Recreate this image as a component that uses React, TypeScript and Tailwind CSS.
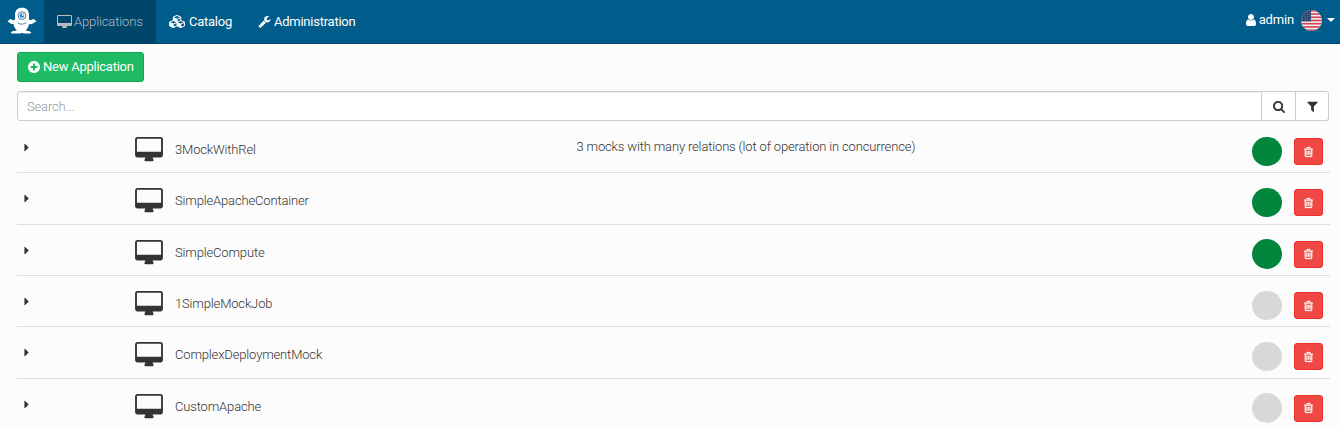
import React from "react";

const icons = {
  desktop: {
    box: "-64 0 1920 1792",
    d: "M1728 992v-832q0-13-9.5-22.5t-22.5-9.5h-1600q-13 0-22.5 9.5t-9.5 22.5v832q0 13 9.5 22.5t22.5 9.5h1600q13 0 22.5-9.5t9.5-22.5zm128-832v1088q0 66-47 113t-113 47h-544q0 37 16 77.5t32 71 16 43.5q0 26-19 45t-45 19h-512q-26 0-45-19t-19-45q0-14 16-44t32-70 16-78h-544q-66 0-113-47t-47-113v-1088q0-66 47-113t113-47h1600q66 0 113 47t47 113z",
  },
  cubes: {
    box: "0 0 2304 1792",
    d: "M640 1632l384-192v-314l-384 164v342zm-64-454l404-173-404-173-404 173zm1088 454l384-192v-314l-384 164v342zm-64-454l404-173-404-173-404 173zm-448-293l384-165v-266l-384 164v267zm-64-379l441-189-441-189-441 189zm1088 518v416q0 36-19 67t-52 47l-448 224q-25 14-57 14t-57-14l-448-224q-4-2-7-4-2 2-7 4l-448 224q-25 14-57 14t-57-14l-448-224q-33-16-52-47t-19-67v-416q0-38 21.5-70t56.5-48l434-186v-400q0-38 21.5-70t56.5-48l448-192q23-10 50-10t50 10l448 192q35 16 56.5 48t21.5 70v400l434 186q36 16 57 48t21 70z",
  },
  wrench: {
    box: "64 0 1664 1792",
    d: "M448 1472q0-26-19-45t-45-19-45 19-19 45 19 45 45 19 45-19 19-45zm644-420l-682 682q-37 37-90 37-52 0-91-37l-106-108q-38-36-38-90 0-53 38-91l681-681q39 98 114.5 173.5t173.5 114.5zm634-435q0 39-23 106-47 134-164.5 217.5t-258.5 83.5q-185 0-316.5-131.5t-131.5-316.5 131.5-316.5 316.5-131.5q58 0 121.5 16.5t107.5 46.5q16 11 16 28t-16 28l-293 169v224l193 107q5-3 79-48.5t135.5-81 70.5-35.5q15 0 23.5 10t8.5 25z",
  },
  user: {
    box: "256 0 1280 1792",
    d: "M1536 1399q0 109-62.5 187t-150.5 78h-854q-88 0-150.5-78t-62.5-187q0-85 8.5-160.5t31.5-152 58.5-131 94-89 134.5-34.5q131 128 313 128t313-128q76 0 134.5 34.5t94 89 58.5 131 31.5 152 8.5 160.5zm-256-887q0 159-112.5 271.5t-271.5 112.5-271.5-112.5-112.5-271.5 112.5-271.5 271.5-112.5 271.5 112.5 112.5 271.5z",
  },
  plus: {
    box: "128 0 1536 1792",
    d: "M1344 960v-128q0-26-19-45t-45-19h-256v-256q0-26-19-45t-45-19h-128q-26 0-45 19t-19 45v256h-256q-26 0-45 19t-19 45v128q0 26 19 45t45 19h256v256q0 26 19 45t45 19h128q26 0 45-19t19-45v-256h256q26 0 45-19t19-45zm320-64q0 209-103 385.5t-279.5 279.5-385.5 103-385.5-103-279.5-279.5-103-385.5 103-385.5 279.5-279.5 385.5-103 385.5 103 279.5 279.5 103 385.5z",
  },
  search: {
    box: "64 0 1664 1792",
    d: "M1216 832q0-185-131.5-316.5t-316.5-131.5-316.5 131.5-131.5 316.5 131.5 316.5 316.5 131.5 316.5-131.5 131.5-316.5zm512 832q0 52-38 90t-90 38q-54 0-90-38l-343-342q-179 124-399 124-143 0-273.5-55.5t-225-150-150-225-55.5-273.5 55.5-273.5 150-225 225-150 273.5-55.5 273.5 55.5 225 150 150 225 55.5 273.5q0 220-124 399l343 343q37 37 37 90z",
  },
  filter: {
    box: "192 0 1408 1792",
    d: "M1595 295q17 41-14 70l-493 493v742q0 42-39 59-13 5-25 5-27 0-45-19l-256-256q-19-19-19-45v-486l-493-493q-31-29-14-70 17-39 59-39h1280q42 0 59 39z",
  },
  trash: {
    box: "192 0 1408 1792",
    d: "M704 736v576q0 14-9 23t-23 9h-64q-14 0-23-9t-9-23v-576q0-14 9-23t23-9h64q14 0 23 9t9 23zm256 0v576q0 14-9 23t-23 9h-64q-14 0-23-9t-9-23v-576q0-14 9-23t23-9h64q14 0 23 9t9 23zm256 0v576q0 14-9 23t-23 9h-64q-14 0-23-9t-9-23v-576q0-14 9-23t23-9h64q14 0 23 9t9 23zm128 724v-948h-896v948q0 22 7 40.5t14.5 27 10.5 8.5h832q3 0 10.5-8.5t14.5-27 7-40.5zm-672-1076h448l-48-117q-7-9-17-11h-317q-10 2-17 11zm928 32v64q0 14-9 23t-23 9h-96v948q0 83-47 143.5t-113 60.5h-832q-66 0-113-58.5t-47-141.5v-952h-96q-14 0-23-9t-9-23v-64q0-14 9-23t23-9h309l70-167q15-37 54-63t79-26h320q40 0 79 26t54 63l70 167h309q14 0 23 9t9 23z",
  },
  caret: {
    box: "576 0 576 1792",
    d: "M1152 896q0 26-19 45l-448 448q-19 19-45 19t-45-19-19-45v-896q0-26 19-45t45-19 45 19l448 448q19 19 19 45z",
  },
};

function Icon({ name, className }: { name: keyof typeof icons; className: string }) {
  return (
    <svg viewBox={icons[name].box} className={`shrink-0 fill-current ${className}`} aria-hidden="true">
      <path d={icons[name].d} />
    </svg>
  );
}

function Mascot() {
  return (
    <svg viewBox="0 0 30 28" className="h-[28px] w-[30px]" aria-hidden="true">
      <path
        fill="#fff"
        d="M15 .8c4.300 0 7 2.700 7 6.600v5.200c1.400.8 2.900.6 4-.3.9-.8 2 .1 1.500 1l1.300.2c.8.300.6 1.500-.2 1.600l-1.300.3c-1.400 1.400-3.200 1.900-5.300 1.700-.3 2.700-1.500 4.800-3.400 6.300 1.700.2 4.500.8 5.300 1.700.5.7.2 1.500-.7 1.500H17.200c-.9 0-1.300-.6-2.200-.6s-1.300.6-2.200.6H4.900c-.9 0-1.200-.8-.7-1.500.8-.9 3.600-1.500 5.700-1.700-1.900-1.500-3.100-3.600-3.400-6.300-1.500.1-2.900-.4-4.200-1.700l-1-.3c-.8-.2-.8-1.400 0-1.600l1.300-.2c-.5-.9.6-1.800 1.500-1 1.200 1 2.600 1.100 3.900.3V7.400C8 3.500 10.700.8 15 .8z"
      />
      <circle cx="15" cy="8.600" r="3.900" fill="#fff" stroke="#3a7fa5" strokeWidth="1" />
      <circle cx="15" cy="8.500" r="2.300" fill="#2f7ba3" />
      <circle cx="15.700" cy="7.900" r="1" fill="#fff" />
      <path d="M11 16c2 1.500 6.300 1.500 8.300-.4" fill="none" stroke="#4d8eb0" strokeWidth="1.200" strokeDasharray="2 .5" />
    </svg>
  );
}

const stripes = [0, 1, 2, 3, 4, 5, 6];

function Flag() {
  return (
    <svg viewBox="0 0 21 21" className="size-[21px] shrink-0" aria-hidden="true">
      <clipPath id="disc">
        <circle cx="10.500" cy="10.500" r="10.500" />
      </clipPath>
      <g clipPath="url(#disc)">
        <rect width="21" height="21" fill="#f4f1f3" />
        {stripes.map((n) => (
          <rect key={n} y={n * 3.23} width="21" height="1.615" fill="#cf4453" />
        ))}
        <rect width="10" height="11.300" fill="#31446f" />
        {[2, 4.5, 7, 9.5].map((y) =>
          [1.5, 4, 6.5, 9].map((x) => <circle key={`${x}-${y}`} cx={x} cy={y} r=".45" fill="#b9c2d2" />)
        )}
      </g>
    </svg>
  );
}

const applications = [
  { name: "3MockWithRel", description: "3 mocks with many relations (lot of operation in concurrence)", deployed: true },
  { name: "SimpleApacheContainer", description: "", deployed: true },
  { name: "SimpleCompute", description: "", deployed: true },
  { name: "1SimpleMockJob", description: "", deployed: false },
  { name: "ComplexDeploymentMock", description: "", deployed: false },
  { name: "CustomApache", description: "", deployed: false },
];

export default function App() {
  return (
    <div className="h-[428px] overflow-hidden bg-[#fcfcfc] font-[Roboto,sans-serif] text-[13px] leading-[18px] font-light tracking-[-0.155px] text-[#333]">
      <header className="flex h-[44px] border-b border-[#00466a] bg-[#005c8a] text-white">
        <div className="flex w-[44px] justify-center pt-[7px]">
          <Mascot />
        </div>
        <nav className="flex font-normal tracking-[-0.25px]">
          <a className="flex w-[112px] items-center gap-[2px] bg-[#00466a] pl-[13px] font-light tracking-[-0.13px] text-[#b6bbbf]">
            <Icon name="desktop" className="h-[14px] w-[15px]" />
            Applications
          </a>
          <a className="flex items-center gap-[3px] pl-[13px]">
            <Icon name="cubes" className="h-[13px] w-[17px]" />
            Catalog
          </a>
          <a className="flex items-center gap-[3px] pl-[26px]">
            <Icon name="wrench" className="h-[13px] w-[13px]" />
            Administration
          </a>
        </nav>
        <div className="ml-auto flex h-[40px] items-center pr-[5px] font-normal">
          <Icon name="user" className="mr-[3px] h-[14px] w-[10px]" />
          <span className="mr-[7px]">admin</span>
          <Flag />
          <span className="ml-[5px] border-x-4 border-t-4 border-x-transparent border-t-white" />
        </div>
      </header>
      <main className="pt-[8px] pr-[10px] pl-[17px]">
        <button className="flex h-[30px] w-[127px] items-center gap-[3px] rounded-[3px] border border-[#12a84f] bg-[#1fba64] pl-[10px] font-normal tracking-[-0.25px] text-white">
          <Icon name="plus" className="h-[14px] w-[12px]" />
          New Application
        </button>
        <div className="mt-[9px] mr-px flex h-[30px]">
          <div className="flex flex-1 items-center rounded-l-[3px] border border-[#ccc] bg-white pt-[2px] pl-[9px] text-[#999] shadow-[inset_0_1px_1px_rgba(0,0,0,0.075)]">
            Search...
          </div>
          <button className="flex w-[34px] items-center justify-center border-y border-r border-[#ccc] bg-white">
            <Icon name="search" className="h-[13px] w-[12px]" />
          </button>
          <button className="flex w-[33px] items-center justify-center rounded-r-[3px] border-y border-r border-[#ccc] bg-white">
            <Icon name="filter" className="h-[13px] w-[11px]" />
          </button>
        </div>
        <ul className="pt-[1.07px]">
          {applications.map((app) => (
            <li key={app.name} className="flex h-[51.33px] border-b border-[#ddd]">
              <div className="w-[117px] pt-[19px] pl-[7px]">
                <Icon name="caret" className="h-[13px] w-[5px]" />
              </div>
              <div className="w-[41px] pt-[15px] pl-[0.5px]">
                <Icon name="desktop" className="h-[26px] w-[28px]" />
              </div>
              <div className="w-[401.5px] pt-[19px]">{app.name}</div>
              <div className="flex-1 pt-[16px]">{app.description}</div>
              <div className="flex items-start pr-[7px]">
                <span
                  className={`mt-[14.500px] mr-[12.500px] size-[29.300px] rounded-full ${app.deployed ? "bg-[#02863e]" : "bg-[#d8d8d8]"}`}
                />
                <button className="mt-[16px] flex h-[27px] w-[29px] items-center justify-center rounded-[3px] border border-[#ee2e2a] bg-[#f04844] text-white">
                  <Icon name="trash" className="h-[12px] w-[9px] stroke-current stroke-[50]" />
                </button>
              </div>
            </li>
          ))}
        </ul>
      </main>
    </div>
  );
}
